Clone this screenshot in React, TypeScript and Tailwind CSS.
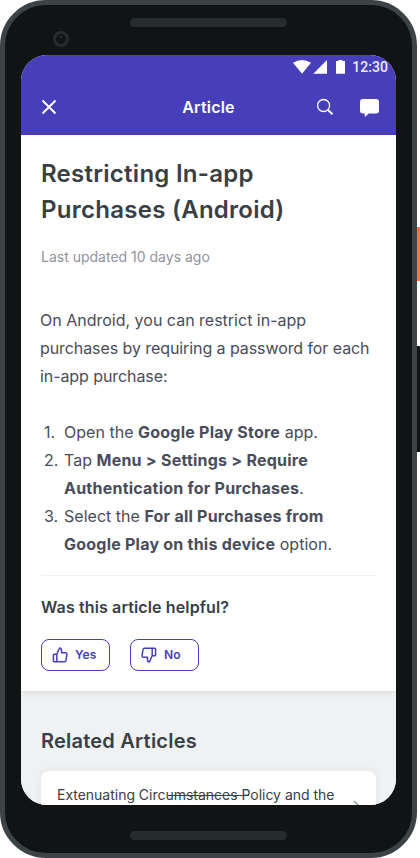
import React from "react";

function StatusBar() {
  return (
    <div className="flex h-6 items-center justify-end gap-[7.500px] pr-2">
      <svg width="52" height="24" viewBox="0 0 52 24" className="shrink-0" fill="#fff">
        <path d="M0 7.800Q9 2.200 18 7.800L9 18.800Z" />
        <path d="M34 5V18.800H20.300Z" />
        <path d="M43 6h2.500V5h4v1H52v12.800h-9z" />
      </svg>
      <span className="font-[Roboto] text-[14px] leading-6 font-medium tracking-[0.050px] text-white/90">12:30</span>
    </div>
  );
}

function AppBar() {
  return (
    <header className="h-20 shrink-0 bg-[#473fba]">
      <StatusBar />
      <div className="grid h-14 grid-cols-[1fr_auto_1fr] items-center text-white">
        <svg width="16" height="16" viewBox="0 0 16 16" className="ml-5" fill="none" stroke="#fff" strokeWidth="2">
          <path d="M1.500 1.500l13 13M14.500 1.500l-13 13" />
        </svg>
        <h1 className="text-[16px] leading-6 font-semibold tracking-[0.200px]">Article</h1>
        <div className="flex items-center justify-end gap-[26px] pr-[17px]">
          <svg width="18" height="18" viewBox="0 0 18 18" fill="none" stroke="#fff">
            <circle cx="7.600" cy="7.500" r="6" strokeWidth="1.300" />
            <path d="M12 12l4.500 4.200" strokeWidth="2" />
          </svg>
          <svg width="19" height="18" viewBox="0 0 19 18" className="mt-px" fill="#fff">
            <path d="M3 0h13q3 0 3 3v8.400q0 3-3 3H8.800L5.400 17.600q-.7.400-.7-.5V14.400H3q-3 0-3-3V3Q0 0 3 0z" />
          </svg>
        </div>
      </div>
    </header>
  );
}

const THUMB = "M2.200 7.200h2.600v7.600H2.200q-.8 0-.8-.8V8q0-.8.8-.8zM4.800 7.200L7.600 1q1.900.2 1.900 2.300v2.500h4.200q1.300.2 1.200 1.500l-.9 6.200q-.2 1.300-1.500 1.300H4.800";

function VoteButton({ label, down = false }: { label: string; down?: boolean }) {
  return (
    <button className="flex h-8 w-[69px] items-center gap-[7px] rounded-[8px] border border-[#473fba] pl-[10px] text-[12px] font-semibold tracking-[0.100px] text-[#473fba]">
      <svg width="16" height="16" viewBox="0 0 16 16" className={down ? "rotate-180" : ""} fill="none" stroke="currentColor" strokeWidth="1.500" strokeLinejoin="round">
        <path d={THUMB} />
      </svg>
      {label}
    </button>
  );
}

function Step({ n, children }: { n: number; children: React.ReactNode }) {
  return (
    <li className="flex">
      <span className="w-6 shrink-0 pl-1">{n}.</span>
      <span className="whitespace-nowrap">{children}</span>
    </li>
  );
}

function Strong({ children }: { children: React.ReactNode }) {
  return <b className="font-bold tracking-[0.230px]">{children}</b>;
}

function Article() {
  return (
    <main className="relative z-10 h-[556px] shrink-0 bg-white px-5 pt-[21px] shadow-[0_1px_8px_rgba(0,0,0,0.1)]">
      <h2 className="text-[24px] leading-9 font-semibold tracking-[0.270px] text-[#394045]">Restricting In-app<br />Purchases (Android)</h2>
      <p className="mt-[19px] text-[14px] leading-5 text-[#93939b]">Last updated 10 days ago</p>
      <div className="mt-[39px] -ml-px text-[16px] leading-7 whitespace-nowrap text-[#494c5a]">
        <p className="tracking-[-0.080px]"><span className="tracking-normal">On Android, you can restrict in-app</span><br />purchases by requiring a password for each<br />in-app purchase:</p>
        <ol className="mt-7 tracking-[0.020px]">
          <Step n={1}>Open the <Strong>Google Play Store</Strong> app.</Step>
          <Step n={2}>Tap <Strong>Menu &gt; Settings &gt; Require<br />Authentication for Purchases</Strong>.</Step>
          <Step n={3}>Select the <Strong>For all Purchases from<br />Google Play on this device</Strong> option.</Step>
        </ol>
      </div>
      <hr className="mt-[17px] border-[#f2f2f4]" />
      <h3 className="mt-[19px] text-[16px] leading-6 font-semibold tracking-[0.130px] text-[#394045]">Was this article helpful?</h3>
      <div className="mt-5 flex gap-5">
        <VoteButton label="Yes" />
        <VoteButton label="No" down />
      </div>
    </main>
  );
}

function Related() {
  return (
    <section className="flex-1 bg-[#f0f1f3] px-5 pt-[34px]">
      <h2 className="text-[20px] leading-8 font-semibold tracking-[0.220px] text-[#394045]">Related Articles</h2>
      <div className="mt-[14px] flex h-20 w-[335px] justify-between rounded-[8px] bg-white pt-3 pr-[16px] pl-4 shadow-[0_0_8px_rgba(0,0,0,0.06)]">
        <div className="relative text-[14px] leading-6 tracking-[-0.020px] whitespace-nowrap text-[#394045]">
          Extenuating Circumstances Policy and the
          <span className="absolute top-[12px] left-[111px] h-px w-[81px] bg-[#394045]" />
        </div>
        <svg width="7" height="12" viewBox="0 0 7 12" className="mt-[17px]" fill="none" stroke="#a0a2a6" strokeWidth="1.600"><path d="M1 1l5 5-5 5" /></svg>
      </div>
    </section>
  );
}

export default function App() {
  return (
    <div className="relative h-[858px] w-[420px] overflow-hidden bg-white font-[Inter,sans-serif]">
      <span className="absolute top-[227px] left-[415px] h-[54px] w-[5px] rounded-[1px] bg-[#fa7252]" />
      <span className="absolute top-[346px] left-[415px] h-[106px] w-[5px] rounded-[1px] bg-[#101415]" />
      <div className="relative flex h-[858px] w-[417px] flex-col items-center rounded-[46px] border-[5px] border-[#3b4347] bg-[#101415]">
        <div className="mt-[13px] h-[9px] w-[157px] shrink-0 rounded-full bg-[#262b2d]" />
        <div className="absolute top-[26px] left-[48px] flex size-4 justify-center rounded-full border-[3px] border-[#262b2d] pt-[2px]"><span className="size-[2px] rounded-full bg-[#343a3c]" /></div>
        <div className="mt-7 flex h-[750px] w-[375px] shrink-0 flex-col overflow-hidden rounded-[26px] bg-white">
          <AppBar />
          <Article />
          <Related />
        </div>
        <div className="mt-[26px] h-[9px] w-[157px] shrink-0 rounded-full bg-[#262b2d]" />
      </div>
    </div>
  );
}
